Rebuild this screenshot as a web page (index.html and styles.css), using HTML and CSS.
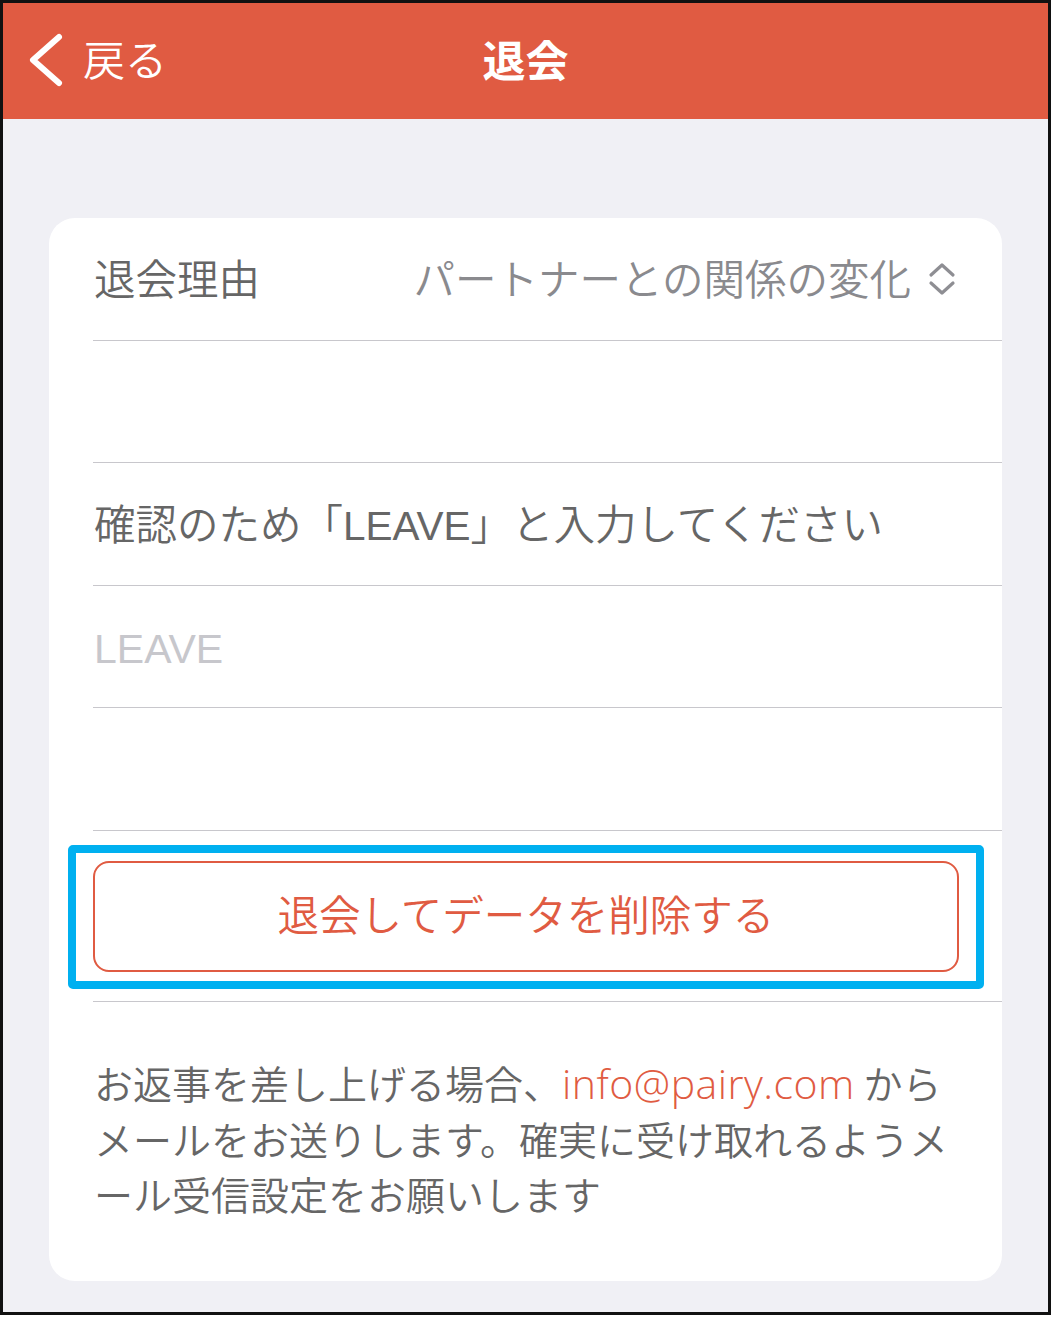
FILE: index.html
```html
<!DOCTYPE html>
<html lang="ja">
<head>
<meta charset="utf-8">
<title>退会</title>
<link rel="stylesheet" href="styles.css">
</head>
<body>
<div class="frame">
  <header class="nav">
    <div class="back">
      <svg class="back-icon" width="40" height="60" viewBox="0 0 40 60" aria-hidden="true">
        <path d="M32 7 L6 30 L32 53" fill="none" stroke="#fff" stroke-width="6" stroke-linecap="round" stroke-linejoin="round"/>
      </svg>
      <span class="back-label">戻る</span>
    </div>
    <h1 class="title">退会</h1>
  </header>
  <main class="content">
    <section class="card">
      <div class="row row-select">
        <span class="label">退会理由</span>
        <span class="value">パートナーとの関係の変化
          <svg class="updown" width="30" height="36" viewBox="0 0 30 36" aria-hidden="true">
            <path d="M4 14 L15 4 L26 14" fill="none" stroke="#8e8e93" stroke-width="3.2" stroke-linecap="round" stroke-linejoin="round"/>
            <path d="M4 22 L15 32 L26 22" fill="none" stroke="#8e8e93" stroke-width="3.2" stroke-linecap="round" stroke-linejoin="round"/>
          </svg>
        </span>
      </div>
      <div class="row"></div>
      <div class="row"><span class="label">確認のため「<span class="latin">LEAVE</span>」と入力してください</span></div>
      <div class="row row-input"><span class="placeholder latin">LEAVE</span></div>
      <div class="row"></div>
      <div class="row row-button">
        <button class="danger">退会してデータを削除する</button>
        <span class="highlight"></span>
      </div>
      <p class="note">お返事を差し上げる場合、<span class="mail">info@pairy.com</span> から<br>メールをお送りします。確実に受け取れるようメ<br>ール受信設定をお願いします</p>
    </section>
  </main>
</div>
</body>
</html>
```

FILE: styles.css
```css
html, body {
  margin: 0;
  padding: 0;
  background: #ffffff;
}

body {
  font-family: "Noto Sans CJK JP", "Noto Sans", sans-serif;
}

.frame {
  width: 1051px;
  height: 1315px;
  box-sizing: border-box;
  border: 3px solid #111111;
  display: flex;
  flex-direction: column;
  background: #f0f0f5;
}

.nav {
  height: 116px;
  flex: none;
  box-sizing: border-box;
  padding-bottom: 6px;
  background: #e05b42;
  display: flex;
  align-items: center;
  justify-content: center;
  position: relative;
  color: #ffffff;
}

.back {
  position: absolute;
  left: 24px;
  top: 25px;
  display: flex;
  align-items: center;
  gap: 16px;
}

.back-label {
  font-size: 42px;
  font-weight: 350;
  line-height: 60px;
  padding-bottom: 4px;
}

.title {
  margin: 0;
  font-size: 43px;
  font-weight: 700;
  line-height: 60px;
}

.content {
  flex: 1;
  padding: 99px 46px 0 46px;
}

.card {
  background: #ffffff;
  border-radius: 26px;
}

.row {
  height: 122.5px;
  box-sizing: border-box;
  margin-left: 44px;
  border-bottom: 1px solid #c8c7cc;
  display: flex;
  align-items: center;
  padding-right: 45px;
  padding-bottom: 4px;
  position: relative;
}

.label {
  font-size: 41.5px;
  font-weight: 350;
  color: #666666;
  margin-left: 1px;
  white-space: nowrap;
}

.latin {
  font-family: "Liberation Sans", "Noto Sans", sans-serif;
  font-size: 40.5px;
}

.row-select {
  justify-content: space-between;
}

.value {
  display: flex;
  align-items: center;
  gap: 16px;
  font-size: 41.5px;
  font-weight: 350;
  color: #8a8a8e;
  white-space: nowrap;
}

.updown {
  display: block;
  margin-top: 4px;
}

.row-input {
  padding-bottom: 0;
  padding-top: 6px;
}

.placeholder {
  font-size: 41px;
  color: #c7c7cc;
  margin-left: 1px;
}

.row-button {
  height: 171px;
  align-items: flex-start;
  padding-top: 30px;
  padding-bottom: 0;
  padding-right: 43px;
}

.danger {
  width: 100%;
  height: 111px;
  box-sizing: border-box;
  border: 2px solid #e05b42;
  border-radius: 16px;
  background: #ffffff;
  color: #e05b42;
  font-family: "Noto Sans CJK JP", "Noto Sans", sans-serif;
  font-size: 41.5px;
  font-weight: 350;
  padding: 0 0 6px 0;
}

.highlight {
  position: absolute;
  left: -25px;
  top: 14px;
  width: 916px;
  height: 144px;
  box-sizing: border-box;
  border: 8px solid #00b0f0;
  border-radius: 5px;
  pointer-events: none;
}

.note {
  margin: 0;
  padding: 53px 20px 60px 45px;
  font-size: 39px;
  line-height: 55px;
  font-weight: 350;
  color: #666666;
  white-space: nowrap;
}

.mail {
  color: #e05b42;
  font-family: "Open Sans", "Noto Sans", sans-serif;
  font-size: 41px;
  letter-spacing: 0.5px;
}
```
